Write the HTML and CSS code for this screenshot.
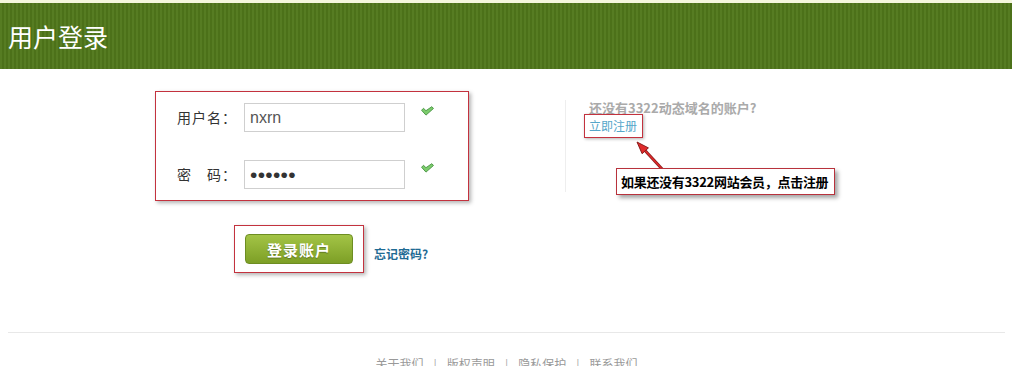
FILE: index.html
```html
<!DOCTYPE html>
<html lang="zh-CN">
  <head>
    <meta charset="UTF-8" />
    <meta name="viewport" content="width=device-width, initial-scale=1.0" />
    <title>用户登录</title>
    <link rel="stylesheet" href="styles.css">
  </head>
  <body>
    <div class="header">
      <h1>用户登录</h1>
    </div>

    <div class="main">
      <div class="login">
        <form class="form-box">
          <div class="row">
            <label class="label">用户名：</label>
            <input class="text-input" type="text" value="nxrn" />
            <svg class="ok" width="13" height="10" viewBox="0 0 12 9"><polygon points="0.5,3.8 2.3,2 4.6,4.2 10,0.5 11.5,2.2 4.6,8.3" fill="#7ccc6c" stroke="#3f8f3a" stroke-width="0.8" stroke-linejoin="round"/></svg>
          </div>
          <div class="row">
            <label class="label">密　码：</label>
            <input class="text-input pass" type="password" value="123456" />
            <svg class="ok" width="13" height="10" viewBox="0 0 12 9"><polygon points="0.5,3.8 2.3,2 4.6,4.2 10,0.5 11.5,2.2 4.6,8.3" fill="#7ccc6c" stroke="#3f8f3a" stroke-width="0.8" stroke-linejoin="round"/></svg>
          </div>
        </form>
        <div class="actions">
          <div class="btn-box">
            <button class="btn" type="button">登录账户</button>
          </div>
          <a class="forgot" href="#">忘记密码?</a>
        </div>
      </div>

      <div class="side">
        <p class="tip">还没有3322动态域名的账户?</p>
        <a class="reg" href="#">立即注册</a>
        <!-- annotation arrow + callout -->
        <svg class="arrow" width="34" height="34" viewBox="0 0 34 34">
          <line x1="11" y1="12.6" x2="29" y2="32" stroke="#8a1c1c" stroke-width="3"/>
          <line x1="11" y1="12.6" x2="29" y2="32" stroke="#e02b2b" stroke-width="1.4"/>
          <polygon points="3,4 14.4,9.9 8.1,15.7" fill="#e02b2b" stroke="#8a1c1c" stroke-width="1"/>
        </svg>
        <div class="callout">如果还没有3322网站会员，点击注册</div>
      </div>
    </div>

    <div class="footer">
      <a href="#">关于我们</a><span class="sep">|</span><a href="#">版权声明</a><span class="sep">|</span><a href="#">隐私保护</a><span class="sep">|</span><a href="#">联系我们</a>
    </div>
  </body>
</html>
```

FILE: styles.css
```css
body {
  margin: 0;
  font-family: Arial, "Liberation Sans", "Noto Sans CJK SC", sans-serif;
  font-size: 12px;
  color: #333;
  background: #fff;
}
a {
  text-decoration: none;
}
.header {
  height: 66px;
  border-top: 3px solid #f4f7dc;
  background: repeating-linear-gradient(90deg, #567c22 0, #567c22 2px, #4c7119 2px, #4c7119 4px);
  display: flex;
  align-items: center;
  padding-left: 8px;
}
.header h1 {
  margin: 0;
  font-family: "Noto Sans CJK SC", sans-serif;
  font-weight: normal;
  font-size: 25px;
  color: #fff;
  line-height: 30px;
}
.main {
  display: flex;
  padding-left: 155px;
  height: 238px;
}
.login {
  width: 314px;
  margin-top: 22px;
}
.form-box {
  margin: 0;
  border: 1px solid #c3323e;
  box-shadow: 2px 2px 4px rgba(0, 0, 0, 0.3);
  padding: 11px 0 11px 21px;
  display: flex;
  flex-direction: column;
  gap: 28px;
}
.row {
  display: flex;
  align-items: flex-start;
}
.label {
  width: 67px;
  line-height: 29px;
  font-family: "Noto Sans CJK SC", sans-serif;
  font-size: 14px;
  letter-spacing: 1px;
  color: #333;
}
.text-input {
  box-sizing: border-box;
  width: 161px;
  height: 29px;
  border: 1px solid #cfcfcf;
  padding: 0 5px;
  font-family: Arial, "Liberation Sans", sans-serif;
  font-size: 16px;
  color: #555;
  outline: none;
}
.pass {
  color: #333;
  font-size: 21px;
  letter-spacing: 0.3px;
}
.ok {
  margin: 3px 0 0 16px;
}
.actions {
  display: flex;
  align-items: flex-start;
  margin-top: 24px;
  padding-left: 79px;
}
.btn-box {
  border: 1px solid #c3323e;
  box-shadow: 2px 2px 4px rgba(0, 0, 0, 0.3);
  padding: 8px 10px 8px 10px;
}
.btn {
  display: block;
  width: 108px;
  height: 30px;
  border: 1px solid #6d8d22;
  border-radius: 4px;
  background: linear-gradient(#a3c446, #7d9f26);
  color: #fff;
  font-family: "Noto Sans CJK SC", sans-serif;
  font-size: 15px;
  font-weight: bold;
  letter-spacing: 1px;
  text-shadow: 0 1px 1px rgba(0, 0, 0, 0.3);
  cursor: pointer;
}
.forgot {
  margin: 21px 0 0 10px;
  font-family: "Noto Sans CJK SC", sans-serif;
  font-size: 12px;
  font-weight: bold;
  line-height: 16px;
  color: #1f6b94;
}
.side {
  position: relative;
  margin: 31px 0 0 96px;
  height: 92px;
  border-left: 1px solid #eee;
  padding-left: 23px;
  width: 300px;
}
.tip {
  margin: 0;
  line-height: 16px;
  font-family: "Noto Sans CJK SC", sans-serif;
  font-size: 13px;
  font-weight: bold;
  color: #aaa;
}
.reg {
  display: inline-block;
  margin: -2px 0 0 -5px;
  padding: 3px 5px 3px 4px;
  border: 1px solid #c3323e;
  box-shadow: 1px 1px 3px rgba(0, 0, 0, 0.3);
  line-height: 16px;
  font-family: "Noto Sans CJK SC", sans-serif;
  font-size: 12px;
  color: #55a6c9;
}
.arrow {
  position: absolute;
  left: 68px;
  top: 38px;
}
.callout {
  position: absolute;
  left: 50px;
  top: 68px;
  width: 213px;
  height: 25px;
  border: 1px solid #b8323c;
  box-shadow: 3px 3px 4px rgba(0, 0, 0, 0.35);
  background: #fff;
  padding-left: 4px;
  line-height: 25px;
  font-family: "Noto Sans CJK SC", sans-serif;
  font-size: 13px;
  font-weight: bold;
  letter-spacing: -0.3px;
  color: #000;
  white-space: nowrap;
}
.footer {
  margin: 25px 7px 0 8px;
  border-top: 1px solid #e8e8e8;
  padding-top: 23px;
  text-align: center;
  line-height: 16px;
  font-family: "Noto Sans CJK SC", sans-serif;
  font-size: 12px;
}
.footer a {
  color: #999;
}
.sep {
  color: #aaa;
  margin: 0 10px;
}
```
